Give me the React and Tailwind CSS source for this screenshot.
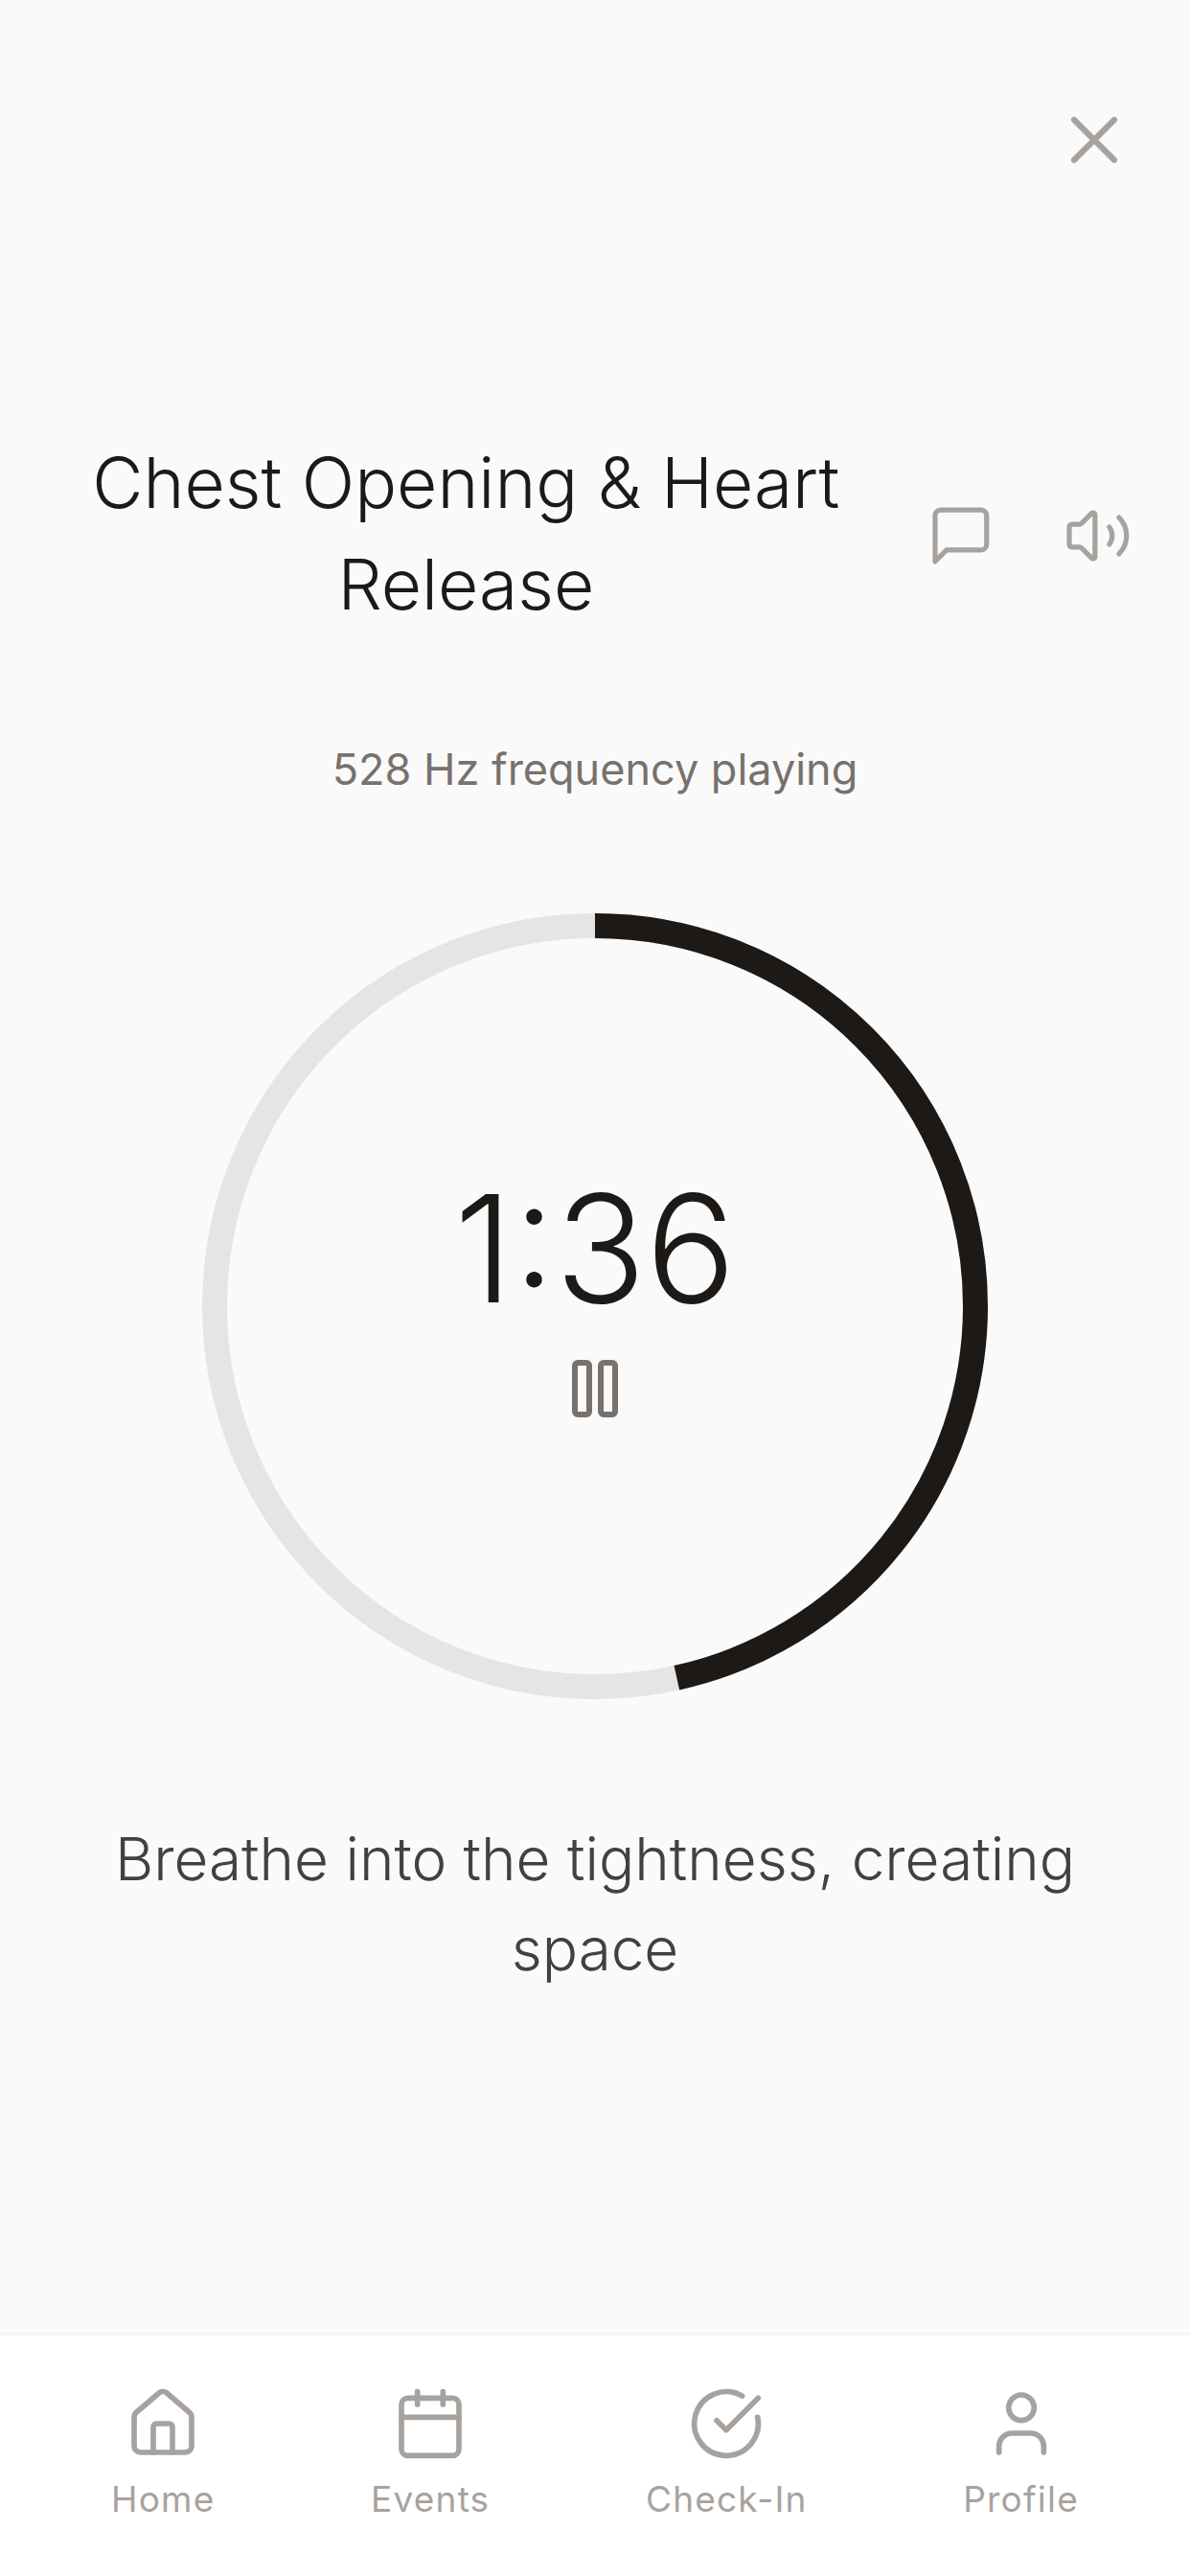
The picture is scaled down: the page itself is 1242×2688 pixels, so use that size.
import { X, Volume2, Pause, House, Calendar, CircleCheckBig, User } from 'lucide-react'

const NAV_ITEMS = [
  { label: 'Home', Icon: House },
  { label: 'Events', Icon: Calendar },
  { label: 'Check-In', Icon: CircleCheckBig },
  { label: 'Profile', Icon: User },
]

const RING_RADIUS = 397
const RING_LENGTH = 2 * Math.PI * RING_RADIUS
const ELAPSED = 167.5 / 360 // sweep of the dark arc, 1:36 left of 3:00

function TimerRing() {
  return (
    <div className="relative flex h-[820px] w-[820px] flex-col items-center justify-center">
      <svg className="absolute inset-0 -rotate-90" width="820" height="820" viewBox="0 0 820 820">
        <circle cx="410" cy="410" r={RING_RADIUS} fill="none" stroke="#e7e5e4" strokeWidth="26" />
        <circle
          cx="410"
          cy="410"
          r={RING_RADIUS}
          fill="none"
          stroke="#1c1917"
          strokeWidth="26"
          strokeDasharray={`${RING_LENGTH * ELAPSED} ${RING_LENGTH}`}
        />
      </svg>
      <span className="mt-[-32px] text-[156px] leading-[188px] font-light text-[#1c1917]">1:36</span>
      <Pause className="mt-[16px] text-[#78716c]" size={72} strokeWidth={2} />
    </div>
  )
}

export default function App() {
  return (
    <div className="flex h-[2688px] w-[1242px] flex-col bg-[#fafafa] font-['Inter',sans-serif]">
      <main className="flex flex-1 flex-col items-center">
        <div className="flex w-full justify-end pt-[104px] pr-[58px]">
          <X className="text-[#a8a29e]" size={84} strokeWidth={1.75} />
        </div>

        <div className="mt-[263px] flex w-full items-center pr-[60px] pl-[78px]">
          <h1 className="w-[820px] text-center text-[73px] leading-[106px] font-light text-[#1c1917]">
            Chest Opening &amp; Heart Release
          </h1>
          <svg
            className="mt-[4px] ml-[72px] text-[#a8a29e]"
            width="72"
            height="72"
            viewBox="0 0 24 24"
            fill="none"
            stroke="currentColor"
            strokeWidth="1.75"
            strokeLinecap="round"
            strokeLinejoin="round"
          >
            <path d="M21 15a2 2 0 0 1-2 2H7l-4 4V5a2 2 0 0 1 2-2h14a2 2 0 0 1 2 2z" />
          </svg>
          <Volume2 className="mt-[4px] ml-[72px] text-[#a8a29e]" size={72} strokeWidth={1.75} />
        </div>

        <p className="mt-[108px] text-[45px] leading-[64px] text-[#78716c]">528 Hz frequency playing</p>

        <div className="mt-[118px]">
          <TimerRing />
        </div>

        <p className="mt-[120px] w-[1060px] text-center text-[62px] leading-[94px] font-light text-[#44403c]">
          Breathe into the tightness, creating space
        </p>
      </main>

      <nav className="flex h-[254px] justify-between border-t-[3px] border-[#f5f5f4] bg-white pt-[52px] pr-[116px] pl-[116px]">
        {NAV_ITEMS.map(({ label, Icon }) => (
          <div key={label} className="flex flex-col items-center text-[#a8a29e]">
            <Icon size={80} strokeWidth={1.7} />
            <span className="mt-[12px] text-[37px] leading-[54px] tracking-[1.2px]">{label}</span>
          </div>
        ))}
      </nav>
    </div>
  )
}
